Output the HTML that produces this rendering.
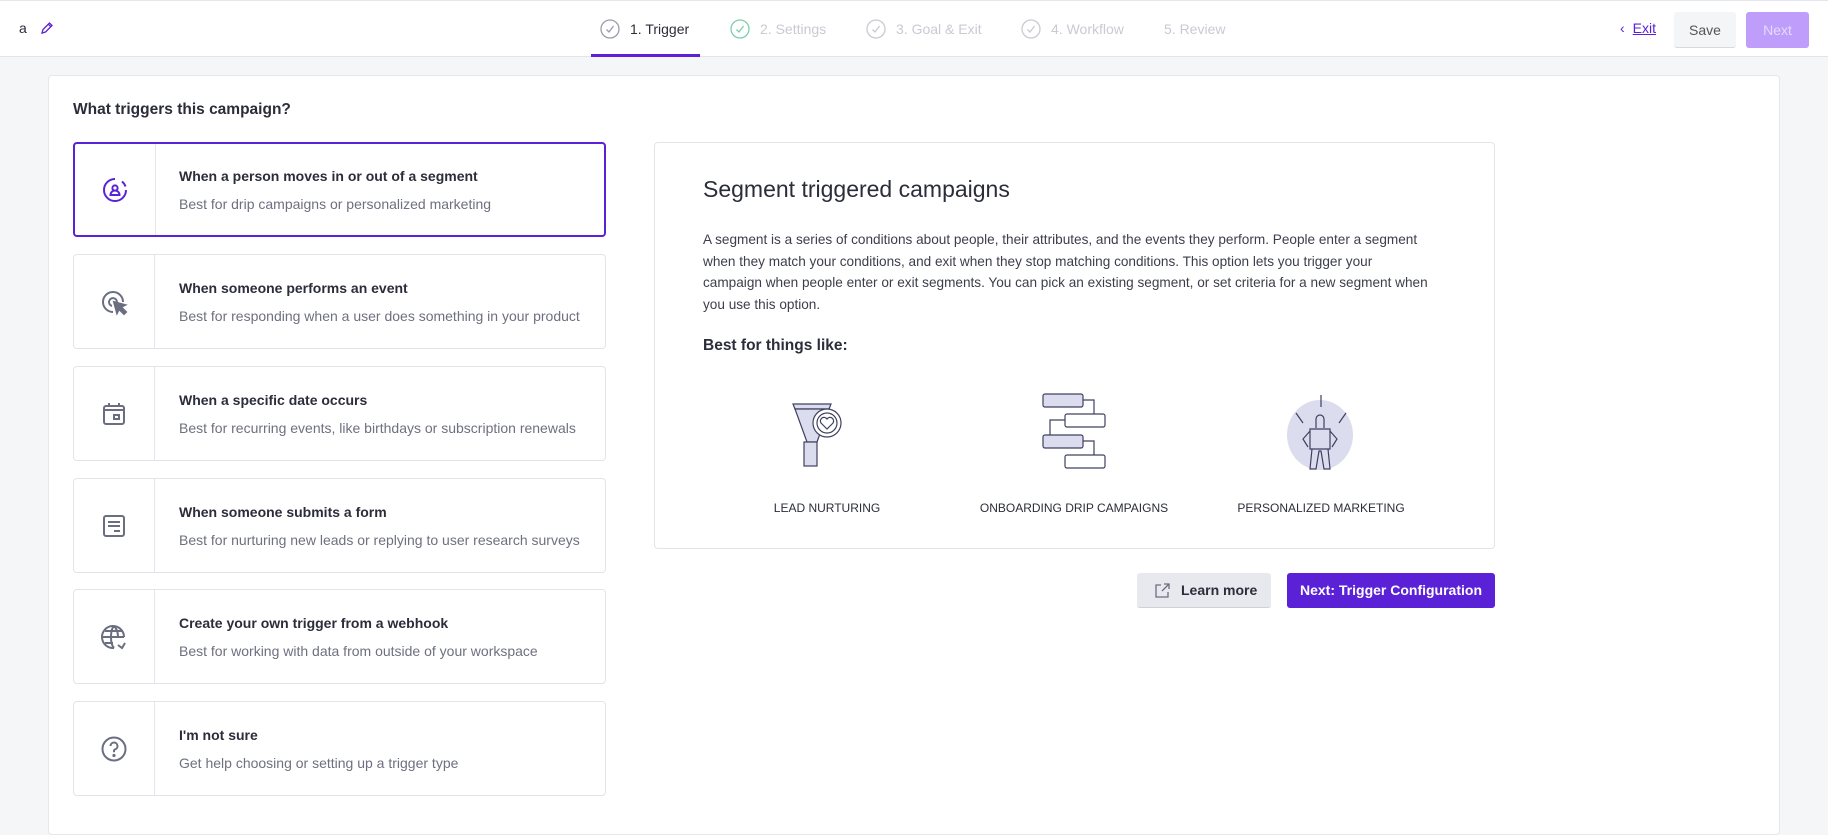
<!DOCTYPE html>
<html><head><meta charset="utf-8">
<style>
*{box-sizing:border-box;margin:0;padding:0}
body{width:1828px;height:814px;overflow:hidden;background:#f5f6f8;font-family:"Liberation Sans",sans-serif;color:#2b2d3a;position:relative}
.hdr{position:absolute;left:0;top:0;width:1828px;height:57px;background:#fff;border-top:1px solid #e6e7ec;border-bottom:1px solid #e3e4ea}
.abs{position:absolute}
.step{position:absolute;top:18px;font-size:14px;color:#c9cad3;white-space:nowrap;display:flex;align-items:center}
.step svg{margin-right:10px}
.card{position:absolute;left:48px;top:75px;width:1732px;height:760px;background:#fff;border:1px solid #e6e7ec;border-radius:4px}
.opt{position:absolute;left:73px;width:533px;height:95px;background:#fff;border:1px solid #e3e4ea;border-radius:4px}
.opt.sel{border:2px solid #5b21d6}
.opt .ic{position:absolute;left:0;top:0;width:81px;height:100%;border-right:1px solid #e6e7ec;display:flex;align-items:center;justify-content:center}
.opt .t{position:absolute;left:105px;top:25px;font-size:14px;font-weight:bold;color:#2b2d3a;white-space:nowrap}
.opt .d{position:absolute;left:105px;top:53px;font-size:14px;color:#6e7080;white-space:nowrap}
.opt.sel .t{left:104px;top:24px}.opt.sel .d{left:104px;top:52px}
.panel{position:absolute;left:654px;top:142px;width:841px;height:407px;border:1px solid #e3e4ea;border-radius:4px;background:#fff}
.lbl{position:absolute;top:501px;font-size:12px;color:#2b2d3a;white-space:nowrap;transform:translateX(-50%)}
</style></head><body>
<div class="hdr">
 <div class="abs" style="left:19px;top:19px;font-size:14px">a</div>
 <svg class="abs" style="left:40px;top:20px" width="14" height="14" viewBox="0 0 14 14"><path d="M2 12l1-3.5L9.5 2l2.5 2.5L5.5 11z M8.3 3.2l2.5 2.5" fill="none" stroke="#5b21d6" stroke-width="1.3"/></svg>
 <div class="step" style="left:600px;color:#2b2d3a"><svg width="20" height="20" viewBox="0 0 20 20"><circle cx="10" cy="10" r="9" fill="none" stroke="#9a9cab" stroke-width="1.3"/><path d="M6.5 10.5l2.5 2.5 4.5-6" fill="none" stroke="#9a9cab" stroke-width="1.3"/></svg>1. Trigger</div>
 <div class="step" style="left:730px"><svg width="20" height="20" viewBox="0 0 20 20"><circle cx="10" cy="10" r="9" fill="none" stroke="#7dcfad" stroke-width="1.3"/><path d="M6.5 10.5l2.5 2.5 4.5-6" fill="none" stroke="#7dcfad" stroke-width="1.3"/></svg>2. Settings</div>
 <div class="step" style="left:866px"><svg width="20" height="20" viewBox="0 0 20 20"><circle cx="10" cy="10" r="9" fill="none" stroke="#c9cad3" stroke-width="1.3"/><path d="M6.5 10.5l2.5 2.5 4.5-6" fill="none" stroke="#c9cad3" stroke-width="1.3"/></svg>3. Goal &amp; Exit</div>
 <div class="step" style="left:1021px"><svg width="20" height="20" viewBox="0 0 20 20"><circle cx="10" cy="10" r="9" fill="none" stroke="#c9cad3" stroke-width="1.3"/><path d="M6.5 10.5l2.5 2.5 4.5-6" fill="none" stroke="#c9cad3" stroke-width="1.3"/></svg>4. Workflow</div>
 <div class="step" style="left:1164px;top:20px">5. Review</div>
 <div class="abs" style="left:591px;top:53px;width:109px;height:3px;background:#5b21d6"></div>
 <div class="abs" style="left:1620px;top:19px;font-size:14px;color:#5b21d6"><span style="margin-right:8px">&#8249;</span><span style="text-decoration:underline">Exit</span></div>
 <div class="abs" style="left:1674px;top:11px;width:62px;height:36px;background:#f4f5f7;border-bottom:1px solid #d8d9df;border-radius:3px;font-size:14px;color:#555;text-align:center;line-height:36px">Save</div>
 <div class="abs" style="left:1746px;top:11px;width:63px;height:36px;background:#bf9dfb;border-radius:3px;font-size:14px;color:#e6dafd;text-align:center;line-height:36px">Next</div>
</div>
<div class="card"></div>
<div class="abs" style="left:73px;top:101px;font-size:15.5px;font-weight:bold;color:#2b2d3a">What triggers this campaign?</div>

<div class="opt sel" style="top:142px"><div class="ic"><svg width="26" height="26" viewBox="0 0 26 26" fill="none" stroke="#5b21d6" stroke-width="2"><path d="M13 2a11 11 0 1 0 11 11"/><path d="M20 4.5a11 11 0 0 1 3.5 5"/><circle cx="13" cy="11" r="2.6"/><path d="M8.5 18h9a4.5 4.5 0 0 0-9 0z"/></svg></div><div class="t">When a person moves in or out of a segment</div><div class="d">Best for drip campaigns or personalized marketing</div></div>

<div class="opt" style="top:254px"><div class="ic"><svg width="28" height="28" viewBox="0 0 28 28" fill="none" stroke="#6b6e80" stroke-width="2"><path d="M13 24a10 10 0 1 1 10-10"/><path d="M12 18a4 4 0 1 1 5-4"/><path d="M14 14l3 11 2-4 5 5 2-2-5-5 4-2z" fill="#6b6e80"/></svg></div><div class="t">When someone performs an event</div><div class="d">Best for responding when a user does something in your product</div></div>

<div class="opt" style="top:366px"><div class="ic"><svg width="26" height="26" viewBox="0 0 26 26" fill="none" stroke="#6b6e80" stroke-width="2"><rect x="3" y="5" width="20" height="18" rx="2"/><path d="M3 9h20M8 2v4M18 2v4"/><rect x="13" y="14" width="5" height="4"/></svg></div><div class="t">When a specific date occurs</div><div class="d">Best for recurring events, like birthdays or subscription renewals</div></div>

<div class="opt" style="top:478px"><div class="ic"><svg width="26" height="26" viewBox="0 0 26 26" fill="none" stroke="#6b6e80" stroke-width="2"><rect x="3" y="3" width="20" height="20" rx="2"/><path d="M7 9h12M7 13h12M13 18h6"/></svg></div><div class="t">When someone submits a form</div><div class="d">Best for nurturing new leads or replying to user research surveys</div></div>

<div class="opt" style="top:589px"><div class="ic"><svg width="28" height="28" viewBox="0 0 28 28" fill="none" stroke="#6b6e80" stroke-width="2"><path d="M24 14A11 11 0 1 0 14 25"/><path d="M14 3c-4 4-4 18 0 22M14 3c3 3 4 7 4 11M3 14h21M5 8h18M5 20h8"/><path d="M18 22l4 3 3-5" /></svg></div><div class="t">Create your own trigger from a webhook</div><div class="d">Best for working with data from outside of your workspace</div></div>

<div class="opt" style="top:701px"><div class="ic"><svg width="28" height="28" viewBox="0 0 28 28" fill="none" stroke="#6b6e80" stroke-width="2"><circle cx="14" cy="14" r="11.5"/><path d="M10.5 11a3.5 3.5 0 1 1 4.5 3.4c-.8.3-1 1-1 1.8v1"/><circle cx="14" cy="20.5" r=".6" fill="#6b6e80"/></svg></div><div class="t">I'm not sure</div><div class="d">Get help choosing or setting up a trigger type</div></div>

<div class="panel"></div>
<div class="abs" style="left:703px;top:176px;font-size:23px;color:#2b2d3a">Segment triggered campaigns</div>
<div class="abs" style="left:703px;top:229px;font-size:13.6px;line-height:21.5px;color:#3c3e4b;white-space:nowrap">A segment is a series of conditions about people, their attributes, and the events they perform. People enter a segment<br>when they match your conditions, and exit when they stop matching conditions. This option lets you trigger your<br>campaign when people enter or exit segments. You can pick an existing segment, or set criteria for a new segment when<br>you use this option.</div>
<div class="abs" style="left:703px;top:337px;font-size:15.5px;color:#2b2d3a;font-weight:bold">Best for things like:</div>

<svg class="abs" style="left:780px;top:395px" width="80" height="75" viewBox="0 0 80 75" fill="none" stroke="#3f4060" stroke-width="1.2"><path d="M13 9h38l-2 5H15z" fill="#dcdcef"/><path d="M15 14h34l-12 33h-10z" fill="#dcdcef"/><rect x="24" y="47" width="13" height="24" fill="#dcdcef"/><circle cx="47" cy="28" r="14" fill="#fff"/><circle cx="47" cy="28" r="10" fill="#fff"/><path d="M47 34l-6-6a3.5 3.5 0 0 1 6-4 3.5 3.5 0 0 1 6 4z" fill="#fff"/></svg>
<svg class="abs" style="left:1040px;top:390px" width="70" height="82" viewBox="0 0 70 82" fill="none" stroke="#3f4060" stroke-width="1.2"><rect x="3" y="4" width="40" height="13" rx="2" fill="#dcdcef"/><rect x="25" y="24" width="40" height="13" rx="2"/><rect x="3" y="45" width="40" height="13" rx="2" fill="#dcdcef"/><rect x="25" y="65" width="40" height="13" rx="2"/><path d="M43 10h11v14M25 30H10v15M43 51h11v14"/></svg>
<svg class="abs" style="left:1286px;top:393px" width="72" height="80" viewBox="0 0 72 80"><ellipse cx="34" cy="42" rx="33" ry="35" fill="#dcdcef"/><g fill="none" stroke="#3f4060" stroke-width="1.2"><path d="M35 2v12M10 20l7 10M60 20l-7 10"/><path d="M30 35v-9a4 4 0 0 1 8 0v9"/><path d="M24 36h20v20H24zM24 38l-7 8 5 8M44 38l7 8-5 8"/><path d="M26 56l-2 20h6l3-18h2l3 18h6l-2-20"/></g></svg>

<div class="lbl" style="left:827px">LEAD NURTURING</div>
<div class="lbl" style="left:1074px">ONBOARDING DRIP CAMPAIGNS</div>
<div class="lbl" style="left:1321px">PERSONALIZED MARKETING</div>

<div class="abs" style="left:1137px;top:573px;width:134px;height:35px;background:#e8e9ef;border-bottom:1px solid #cfd0d8;border-radius:3px;font-size:14px;color:#2b2d3a;line-height:35px;padding-left:44px;font-weight:bold">Learn more</div>
<svg class="abs" style="left:1154px;top:582px" width="17" height="17" viewBox="0 0 17 17" fill="none" stroke="#6b6e80" stroke-width="1.3"><path d="M7 3H2v12h12v-5M10 2h5v5M15 2L8 9"/></svg>
<div class="abs" style="left:1287px;top:573px;width:208px;height:35px;background:#5b21d6;border-radius:3px;font-size:14px;color:#fff;line-height:35px;text-align:center;font-weight:bold">Next: Trigger Configuration</div>
</body></html>
